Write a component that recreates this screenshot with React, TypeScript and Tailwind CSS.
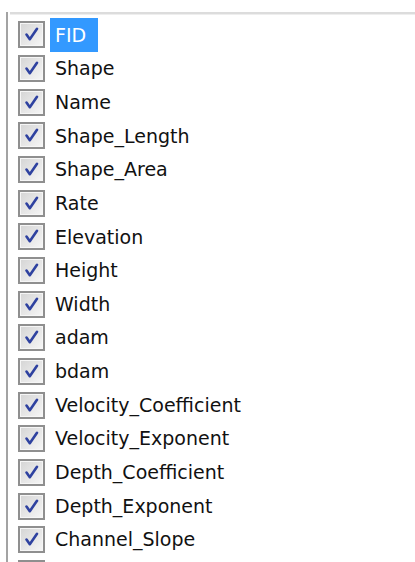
import React from "react";

const fields = [
  "FID",
  "Shape",
  "Name",
  "Shape_Length",
  "Shape_Area",
  "Rate",
  "Elevation",
  "Height",
  "Width",
  "adam",
  "bdam",
  "Velocity_Coefficient",
  "Velocity_Exponent",
  "Depth_Coefficient",
  "Depth_Exponent",
  "Channel_Slope",
  "",
];

function CheckBox() {
  return (
    <div className="w-[27px] h-[27px] shrink-0 border-2 border-[#8f8f8f] bg-white">
      <div className="w-full h-full border border-[#f6f6f6] bg-gradient-to-br from-[#d6d6d6] to-[#f5f5f5] flex items-center justify-center">
        <svg width="19" height="19" viewBox="0 0 19 19">
          <path
            d="M4.5 9.5 L7.8 14.2 L15 3.8"
            fill="none"
            stroke="#2f42a0"
            strokeWidth="2.6"
            strokeLinecap="round"
            strokeLinejoin="round"
          />
        </svg>
      </div>
    </div>
  );
}

export default function App() {
  return (
    <div className="w-[415px] h-[562px] overflow-hidden bg-white pl-[6px] pt-[12px]">
      <div className="h-full border-l-2 border-[#a3a3a3] pl-[2px]">
        <div className="h-[3px] bg-[#dcdcdc] border-b border-[#eeeeee]" />
        <div
          className="pt-[3px] pl-[8px] text-[19px] text-[#111111]"
          style={{ fontFamily: '"DejaVu Sans", "Liberation Sans", sans-serif' }}
        >
          {fields.map((f, i) => (
            <div key={i} className="h-[33.67px] flex items-center">
              <CheckBox />
              {f && (
                <span
                  className={
                    i === 0
                      ? "ml-[5px] pl-[5px] pr-[12px] h-[34px] flex items-center bg-[#3399ff] text-white"
                      : "ml-[5px] px-[5px]"
                  }
                >
                  {f}
                </span>
              )}
            </div>
          ))}
        </div>
      </div>
    </div>
  );
}
